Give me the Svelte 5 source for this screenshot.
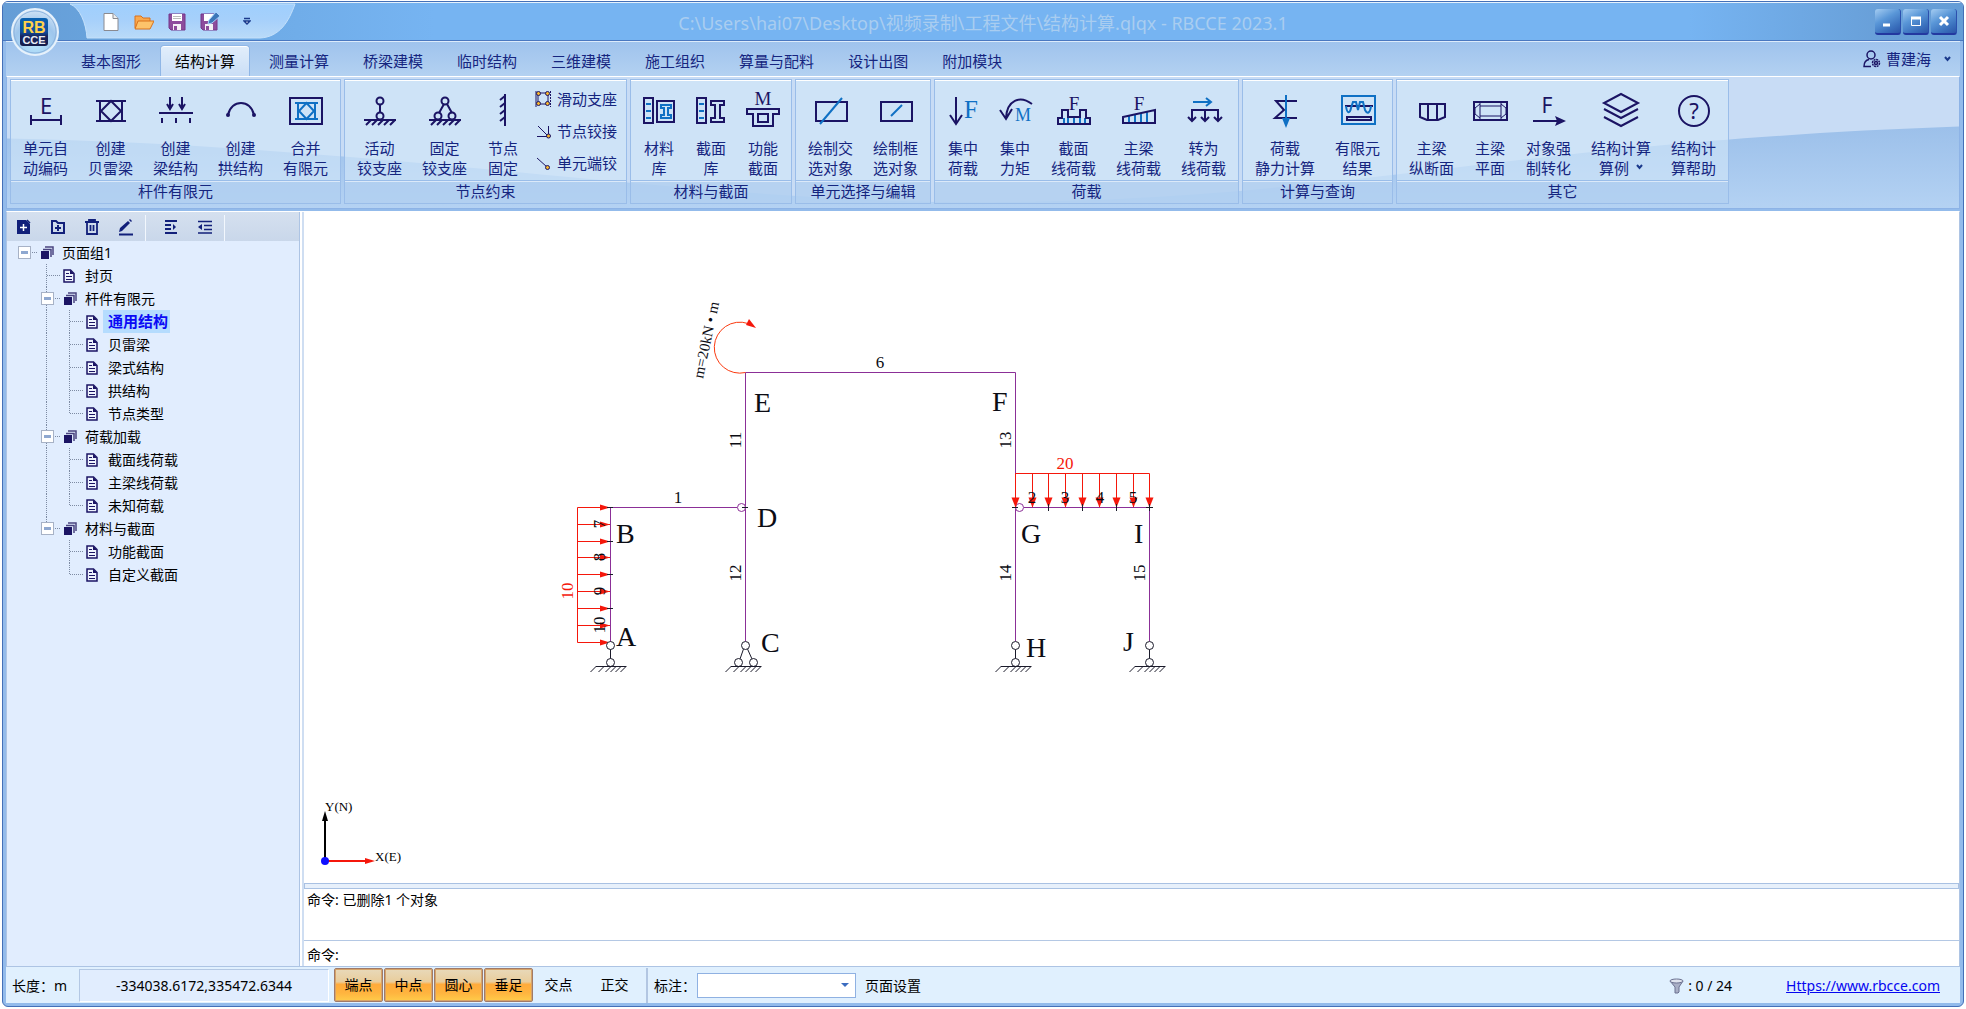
<script>
  const D = '#1b1464';
  const B = '#0f70c4';
  const line = (d, c = D, w = 2) => `<path d="${d}" fill="none" stroke="${c}" stroke-width="${w}"/>`;
  const ring = (x, y, r = 3.5) => `<circle cx="${x}" cy="${y}" r="${r}" fill="none" stroke="${D}" stroke-width="2"/>`;
  const letter = (t, x, y, size, c = D, fam = 'Liberation Serif') =>
    `<text x="${x}" y="${y}" font-size="${size}" fill="${c}" text-anchor="middle" font-family="${fam}, serif">${t}</text>`;
  const ground = line('M2 28H34') + line('M9 28L4 33M15 28L10 33M21 28L16 33M27 28L22 33M33 28L28 33');

  const icons = {
    encode: letter('E', 18, 22, 22, D, 'Noto Sans') + line('M2 28H34M3 23V33M33 23V33'),
    bailey: line('M3 9H33M3 29H33M7 9V29M29 9V29M18 9L28 19 18 29 8 19Z'),
    beam: line('M1 21H35M12 5V17M24 5V17M4 26V31M18 26V31M32 26V31') + line('M9 12L12 17 15 12M21 12L24 17 27 12'),
    arch: line('M5 23C8 7 28 7 31 23') + `<circle cx="5" cy="23" r="2" fill="${D}"/><circle cx="31" cy="23" r="2" fill="${D}"/>`,
    merge: line('M2 6H34V32H2Z') + line('M7 11H30M7 27H30M10 11V27M27 11V27M18.5 11L26 19 18.5 27 11 19Z', B),
    roller: ring(18, 9) + line('M18 12V21') + ring(18, 24) + ground,
    hinge: ring(18, 9) + line('M17 12L12 21M20 12L25 21') + ring(11, 24) + ring(25, 24) + ground,
    fixed: line('M20 2V34') + line('M20 4L15 8M20 11L15 15M20 18L15 22M20 25L15 29'),
    material: line('M3 6H12V31H3Z') + line('M5 12H10M5 19H10M5 26H10', B) + line('M16 9H33V30H16Z') + line('M20 13H30V16H27V23H30V26H20V23H23V16H20Z', B),
    sections: line('M4 6H13V31H4Z') + line('M6 12H11M6 19H11M6 26H11', B) + line('M18 9H31V13H27V26H31V30H18V26H22V13H18Z'),
    funcsec: letter('M', 18, 13, 19) + line('M2 17H34V22H28V34H8V22H2Z') + line('M13 22H23V30H13Z'),
    cross: line('M3 10H34V29H3Z') + line('M7 32L29 6', B),
    frame: line('M3 10H34V29H3Z') + line('M13 24L24 13', B),
    force: line('M11 5V31M5 23L11 32 17 23') + letter('F', 26, 26, 25, B),
    moment: line('M35 12C23 3 10 8 9 26M3 18L9 27 15 17') + letter('M', 26, 29, 18, B),
    secload: line('M8 26V32M12 26V32M18 26V32M24 26V32M29 26V32', B) + line('M2 32V26H6V18H12V25H24V18H30V26H34V32Z') + letter('F', 18, 18, 19),
    beamload: line('M8 24V30M14 23V30M20 22V30M26 20V30', B) + line('M2 25L34 18V31H2Z') + letter('F', 18, 18, 19),
    convert: line('M7 10H25M20 6L25 10 20 14', B) + line('M6 29V18H32V29M19 18V29M2 25L6 29 10 25M15 25L19 29 23 25M28 25L32 29 36 25'),
    statics: line('M30 9H9L17 18 8 26H30') + line('M19 3V30', B) + `<path d="M15 26H23L19 36Z" fill="${B}"/>`,
    results: line('M2 4H35V32H2Z', B) + line('M5 14H33M7 25H31V28H7Z') + line('M6 14C7 22 10 22 11 16L13 10 16 10 18 18 20 10 23 10 25 18C27 22 30 22 31 14', B),
    profile: line('M6 12H31V25L24 28H13L6 25Z M14 12V28M23 12V28'),
    plan: line('M2 10H35V28H2Z') + line('M8 10V28M29 10V28M8 14H29M8 24H29M8 12L3 16V22L8 26M29 12L34 16V22L29 26', D, 1),
    forced: letter('F', 16, 21, 21, D, 'Noto Sans') + line('M2 29H30') + `<path d="M24 24L35 29 24 34 26 29Z" fill="${D}"/>`,
    layers: line('M18 2L35 11 18 20 1 11ZM1 17L18 26 35 17M1 25L18 34 35 25'),
    help: `<circle cx="18" cy="19" r="15" fill="none" stroke="${D}" stroke-width="2"/>` + letter('?', 18, 27, 22, D, 'Noto Sans'),
  };

  const groups = [
    { name: '杆件有限元', items: [['encode', '单元自', '动编码'], ['bailey', '创建', '贝雷梁'], ['beam', '创建', '梁结构'], ['arch', '创建', '拱结构'], ['merge', '合并', '有限元']] },
    { name: '节点约束', items: [['roller', '活动', '铰支座'], ['hinge', '固定', '铰支座'], ['fixed', '节点', '固定']], small: ['滑动支座', '节点铰接', '单元端铰'] },
    { name: '材料与截面', items: [['material', '材料', '库'], ['sections', '截面', '库'], ['funcsec', '功能', '截面']] },
    { name: '单元选择与编辑', items: [['cross', '绘制交', '选对象'], ['frame', '绘制框', '选对象']] },
    { name: '荷载', items: [['force', '集中', '荷载'], ['moment', '集中', '力矩'], ['secload', '截面', '线荷载'], ['beamload', '主梁', '线荷载'], ['convert', '转为', '线荷载']] },
    { name: '计算与查询', items: [['statics', '荷载', '静力计算'], ['results', '有限元', '结果']] },
    { name: '其它', items: [['profile', '主梁', '纵断面'], ['plan', '主梁', '平面'], ['forced', '对象强', '制转化'], ['layers', '结构计算', '算例', true], ['help', '结构计', '算帮助']] },
  ];
  const size = (it) => ['', '', 'w2', 'w3', 'w4'][Math.max(it[1].length, it[2].length)];

  const smallIcons = [
    `<path d="M1 1V17M4 3H13M4 14H13M3 3V14M13 3V14" stroke="${D}" fill="none"/><path d="M15.5 1V17" stroke="${D}" stroke-dasharray="2 1"/><g fill="#f7b52c" stroke="${D}"><circle cx="3.5" cy="3.5" r="2"/><circle cx="12.5" cy="3.5" r="2"/><circle cx="3.5" cy="13.5" r="2"/><circle cx="12.5" cy="13.5" r="2"/></g>`,
    `<path d="M3 4L13 14M13.500 4V14M2 14.500H13" stroke="${D}" fill="none"/><circle cx="13.500" cy="14" r="2" fill="#f7b52c" stroke="${D}"/>`,
    `<path d="M2 4L12 13" stroke="${D}"/><circle cx="12.500" cy="13.500" r="2" fill="#f7b52c" stroke="${D}"/>`,
  ];

  const tabs = ['基本图形', '结构计算', '测量计算', '桥梁建模', '临时结构', '三维建模', '施工组织', '算量与配料', '设计出图', '附加模块'];
  let activeTab = $state('结构计算');
  let selected = $state('通用结构');

  const tree = [
    ['页面组1', ['g']],
    ['封页', ['b', 't']],
    ['杆件有限元', ['b', 'g']],
    ['通用结构', ['b', 'v', 't']],
    ['贝雷梁', ['b', 'v', 't']],
    ['梁式结构', ['b', 'v', 't']],
    ['拱结构', ['b', 'v', 't']],
    ['节点类型', ['b', 'v', 'l']],
    ['荷载加载', ['b', 'g']],
    ['截面线荷载', ['b', 'v', 't']],
    ['主梁线荷载', ['b', 'v', 't']],
    ['未知荷载', ['b', 'v', 'l']],
    ['材料与截面', ['b', 'g']],
    ['功能截面', ['b', 'b', 't']],
    ['自定义截面', ['b', 'b', 'l']],
  ];

  const sideLoad = [507.5, 524.5, 541.5, 557.5, 574.5, 591.5, 608.5, 625.5, 642.5];
  const topLoad = [1015.5, 1032.5, 1048.5, 1065.5, 1082.5, 1099.5, 1116.5, 1133.5, 1149.5];
  const nodes = [['E', 754, 412], ['B', 616, 543], ['D', 757, 527], ['A', 616, 646], ['C', 761, 652], ['F', 992, 411], ['G', 1021, 543], ['I', 1134, 543], ['H', 1026, 657], ['J', 1123, 651]];
  const flat = [['1', 678, 503], ['6', 880, 368], ['2', 1032, 503], ['3', 1065, 503], ['4', 1100, 503], ['5', 1133, 503]];
  const upright = [['11', 741, 440], ['12', 741, 573], ['13', 1011, 440], ['14', 1011, 573], ['15', 1145, 573], ['7', 605, 524], ['8', 605, 557], ['9', 605, 591], ['10', 605, 625]];

  let snaps = $state([
    { name: '端点', on: true }, { name: '中点', on: true }, { name: '圆心', on: true },
    { name: '垂足', on: true }, { name: '交点', on: false }, { name: '正交', on: false },
  ]);
</script>

<div class="desk">
  <div class="window">
    <header class="title">
      <svg class="quick-bg" width="226" height="36" viewBox="0 0 226 36">
        <defs>
          <linearGradient id="qa" x1="0" y1="0" x2="0" y2="1">
            <stop offset="0" stop-color="#9fcffd" /><stop offset=".45" stop-color="#a6d0fb" /><stop offset="1" stop-color="#b9daf8" />
          </linearGradient>
        </defs>
        <path d="M0 1C10 5 16 20 17 35H190C210 34 219 18 225 1Z" fill="url(#qa)" stroke="#c4e0fa" />
      </svg>
      <div class="quick">
        <button aria-label="新建"><svg width="18" height="20"><path d="M2 1.500H11L16 6.500V18.500H2Z" fill="#fff" stroke="#8a8a90" /><path d="M11 1.500V6.500H16" fill="#eee" stroke="#8a8a90" /></svg></button>
        <button aria-label="打开"><svg width="20" height="20"><path d="M1 16V4H7L9 6H16V9" fill="#f9a94e" stroke="#d9711c" /><path d="M1 17L4 9H20L16 17Z" fill="#fdc36b" stroke="#d9711c" /></svg></button>
        <button aria-label="保存"><svg width="18" height="20"><path d="M1 2H17V18H3L1 16Z" fill="#8d4c9c" stroke="#74358a" /><path d="M4 2H14V9H4Z" fill="#fff" /><path d="M5 4.500H13M5 6.500H13" stroke="#bbb" /><path d="M5 12H13V18H5Z" fill="#f3f0f5" /><path d="M6 14H9V18H6Z" fill="#8d4c9c" /></svg></button>
        <button aria-label="另存为"><svg width="20" height="20"><path d="M1 2H17V18H3L1 16Z" fill="#8d4c9c" stroke="#74358a" /><path d="M4 2H14V9H4Z" fill="#fff" /><path d="M5 12H13V18H5Z" fill="#f3f0f5" /><path d="M6 14H9V18H6Z" fill="#8d4c9c" /><path d="M16 0L20 4 12 11 8 12 9 8Z" fill="#3b76b8" stroke="#a6d0fb" /></svg></button>
        <button class="more" aria-label="自定义"><svg width="8" height="10"><path d="M1 1.500H7M1 4L4 7 7 4Z" stroke="#1b3a8c" stroke-width="1.500" fill="#fff" /></svg></button>
      </div>
      <h1>C:\Users\hai07\Desktop\视频录制\工程文件\结构计算.qlqx - RBCCE 2023.1</h1>
      <div class="controls">
        <button aria-label="最小化"><svg width="12" height="12"><path d="M1 10H8" stroke="#fff" stroke-width="3" /></svg></button>
        <button aria-label="最大化"><svg width="12" height="12"><path d="M1 3H11" stroke="#fff" stroke-width="3" /><path d="M1.500 2V10.500H10.500V2" fill="none" stroke="#fff" /></svg></button>
        <button aria-label="关闭"><svg width="12" height="12"><path d="M2 2L10 10M10 2L2 10" stroke="#fff" stroke-width="3" /></svg></button>
      </div>
    </header>

    <button class="orb" aria-label="RBCCE">
      <svg width="50" height="50" viewBox="0 0 50 50">
        <defs>
          <radialGradient id="orb" cx=".5" cy=".75" r=".75"><stop offset="0" stop-color="#b8e6fd" /><stop offset=".6" stop-color="#9ec6ec" /><stop offset="1" stop-color="#d5e6f7" /></radialGradient>
          <linearGradient id="chip" x1="0" y1="0" x2="0" y2="1"><stop offset="0" stop-color="#0b62b0" /><stop offset=".5" stop-color="#0e4d9d" /><stop offset=".65" stop-color="#18255f" /><stop offset="1" stop-color="#141c4a" /></linearGradient>
        </defs>
        <circle cx="25" cy="25" r="23" fill="url(#orb)" stroke="#e6f1fb" stroke-width="2" />
        <circle cx="25" cy="25" r="21" fill="none" stroke="#8db4de" />
        <rect x="10" y="11" width="28" height="28" rx="3" fill="url(#chip)" />
        <text x="24" y="26" text-anchor="middle" font-family="Liberation Sans, sans-serif" font-weight="bold" font-size="16" fill="#ffd24a">RB</text>
        <text x="24" y="37" text-anchor="middle" font-family="Liberation Sans, sans-serif" font-weight="bold" font-size="11" fill="#e8ecf5">CCE</text>
      </svg>
    </button>

    <div class="body">
      <nav class="tabs">
        {#each tabs as tab}
          <button class="tab" class:active={tab === activeTab} onclick={() => (activeTab = tab)}>{tab}</button>
        {/each}
        <button class="user">
          <svg width="18" height="18" viewBox="0 0 18 18"><g fill="none" stroke={D} stroke-width="1.500"><circle cx="8" cy="5" r="4" /><path d="M8 16.500H1C1 12 3 10 6 9.500" /><circle cx="13" cy="13" r="3.500" stroke-dasharray="2 .7" /><circle cx="13" cy="13" r="1.500" /></g></svg>
          <span>曹建海</span>
          <svg class="chev" width="7" height="6"><path d="M1 1L3.500 4 6 1" fill="none" stroke="#1b3a8c" stroke-width="2" /></svg>
        </button>
      </nav>

      <section class="ribbon">
        <svg class="swoosh" viewBox="0 0 1952 132" preserveAspectRatio="none" aria-hidden="true">
          <defs><linearGradient id="sw" x1="0" y1="0" x2="0" y2="1"><stop offset="0" stop-color="#9cc0ea" /><stop offset="1" stop-color="#b4d2f3" /></linearGradient></defs>
          <path d="M0 62C400 70 700 130 1000 126 1350 122 1500 66 1952 50V132H0Z" fill="url(#sw)" />
        </svg>
        {#each groups as g}
          <div class="group">
            <div class="items">
              {#each g.items as it}
                <button class="cmd {size(it)}">
                  <svg width="36" height="36" viewBox="0 0 36 36">{@html icons[it[0]]}</svg>
                  <span>{it[1]}</span>
                  <span>{it[2]}{#if it[3]}<svg class="drop" width="7" height="8"><path d="M1 1L3.500 4 6 1" fill="none" stroke="#1b3a8c" stroke-width="2" /></svg>{/if}</span>
                </button>
              {/each}
              {#if g.small}
                <div class="stack">
                  {#each g.small as s, i}
                    <button><svg width="18" height="18">{@html smallIcons[i]}</svg>{s}</button>
                  {/each}
                </div>
              {/if}
            </div>
            <div class="caption">{g.name}</div>
          </div>
        {/each}
      </section>

      <main>
        <aside>
          <div class="tools">
            <button aria-label="新建页"><svg width="16" height="16"><path d="M1 1H10L14 5V15H1Z" fill="#12207a" /><path d="M11 1L14 4" stroke="#12207a" stroke-width="1.500" /><path d="M4 8.500H11M7.500 5V12" stroke="#fff" stroke-width="1.500" /></svg></button>
            <button aria-label="新建组"><svg width="16" height="16"><path d="M2 2H6L8 4H14V14H2Z" fill="none" stroke="#12207a" stroke-width="2" /><path d="M5 9H11M8 6V12" stroke="#12207a" stroke-width="2" /></svg></button>
            <button aria-label="删除"><svg width="16" height="18"><path d="M1 4H15M5 4V2H11V4M3 4V16H13V4M6.500 7V13M9.500 7V13" fill="none" stroke="#12207a" stroke-width="1.800" /></svg></button>
            <button aria-label="编辑"><svg width="16" height="18"><path d="M1 16.500H15" stroke="#12207a" stroke-width="2" /><path d="M1 14L2 10 10 3 12 5 4 13ZM11 2L12 1 14 3 13 4Z" fill="#12207a" /></svg></button>
            <span class="rule"></span>
            <button aria-label="展开"><svg width="14" height="16"><path d="M1 2H13M1 6H7M1 10H7M1 14H13" stroke="#12207a" stroke-width="2" /><path d="M9 5L12 8 9 11Z" fill="#12207a" /></svg></button>
            <button aria-label="折叠"><svg width="16" height="16"><path d="M1 2.500H15M7 6.500H15M7 10.500H15M1 14H15" stroke="#12207a" stroke-width="1.500" /><path d="M5 5L1 8 5 11Z" fill="#12207a" /></svg></button>
            <span class="rule"></span>
          </div>
          <ul class="tree">
            {#each tree as [label, cells]}
              {@const group = cells.includes('g')}
              <li>
                {#each cells as c}
                  {#if c === 'g'}
                    <span class="cell toggle-cell" class:mid={cells.length > 1} class:end={label === '材料与截面'}><button class="toggle" aria-label="折叠{label}"></button></span>
                  {:else}
                    <span class="cell {c}"></span>
                  {/if}
                {/each}
                <span class="pic">
                  {#if group}
                    <svg width="14" height="14"><path d="M1 5H9V13H1Z" fill={D} /><path d="M3 3.500H11V11M5 1H13V9" fill="none" stroke="#4a4480" stroke-width="1.500" /></svg>
                  {:else}
                    <svg width="12" height="14"><path d="M1 1H7.500L11 4.500V13H1Z" fill="#eef3fd" stroke={D} stroke-width="1.500" /><path d="M7 1V5H11Z" fill={D} /><path d="M3 4.500H6M3 7.500H9M3 10.500H9" stroke={D} /></svg>
                  {/if}
                </span>
                <button class="label" class:sel={label === selected} onclick={() => (selected = label)}>{label}</button>
              </li>
            {/each}
          </ul>
        </aside>

        <div class="work">
          <div class="canvas">
            <svg class="drawing" width="1654" height="671">
              <g transform="translate(-304 -212)">
                <g stroke="#8b2f97" fill="none">
                  <path d="M610.500 642V507.500H737M745.500 641V372.500H1015.500V641M1024 507.500H1149.500V641" />
                  <circle cx="741.500" cy="507.500" r="4" fill="#fff" /><circle cx="1019.500" cy="507.500" r="4" fill="#fff" />
                </g>
                <g stroke="#f5170b" fill="none">
                  <path d="M577.500 507.500V642.500M1015.500 473.500H1149.500" />
                  {#each sideLoad as y}<path d="M577.500 {y}H610" />{/each}
                  {#each topLoad as x}<path d="M{x} 473.500V507" />{/each}
                  <path d="M745.500 372.500A25.500 25.500 0 1 1 748 323.500" stroke="#fa3a10" />
                </g>
                <g fill="#f5170b">
                  {#each sideLoad as y}<path d="M600 {y - 3}L610 {y}L600 {y + 3}Z" />{/each}
                  {#each topLoad as x}<path d="M{x - 4} 497.500L{x} 507.500L{x + 4} 497.500Z" />{/each}
                  <path d="M756 328L749 319 746 325Z" />
                </g>
                <g stroke="#1a1a2a" fill="none">
                  <path d="M607 541.500H613M607 574.500H613M607 608.500H613M607 507.500H613M742 507.500H748M1012 507.500H1018M1146 507.500H1153M1048.500 504V511M1082.500 504V511M1116.500 504V511M1149.500 504V511" />
                  {#each [610.5, 745.5, 1015.5, 1149.5] as x}
                    {#if x === 745.5}
                      <path d="M743.500 649L740 659M747.500 649L752 659" />
                      <circle cx={x - 7} cy="662.500" r="4" fill="#fff" /><circle cx={x + 8} cy="662.500" r="4" fill="#fff" />
                    {:else}
                      <path d="M{x} 649V659" /><circle cx={x} cy="662.500" r="4" fill="#fff" />
                    {/if}
                    <circle cx={x} cy="645.500" r="4" fill="#fff" />
                    <path d="M{x - 15} 666.500H{x + 16}" />
                    {#each [-15, -7, 0, 5, 10, 15] as k}<path d="M{x + k} 667L{x + k - 5} 672" />{/each}
                  {/each}
                </g>
                <g class="node">{#each nodes as [t, x, y]}<text {x} {y}>{t}</text>{/each}</g>
                <g class="num">
                  {#each flat as [t, x, y]}<text {x} {y}>{t}</text>{/each}
                  {#each upright as [t, x, y]}<text transform="translate({x} {y}) rotate(-90)">{t}</text>{/each}
                  <text class="red" x="1065" y="469">20</text>
                  <text class="red" transform="translate(573 591) rotate(-90)">10</text>
                  <text class="moment" transform="translate(711 341) rotate(-78)">m=20kN • m</text>
                </g>
              </g>
            </svg>
            <svg class="axes" width="90" height="70">
              <path d="M11 56V16" stroke="#000" stroke-width="2" /><path d="M11 6L8 16H14Z" />
              <path d="M11 56H52" stroke="#f5170b" stroke-width="2" /><path d="M61 56L51 53V59Z" fill="#f5170b" />
              <circle cx="11" cy="56" r="4" fill="#1010ff" />
              <text x="11" y="6">Y(N)</text><text x="61" y="56">X(E)</text>
            </svg>
          </div>
          <div class="split"></div>
          <div class="log">命令: 已删除1 个对象</div>
          <div class="prompt"><label for="cmd">命令:</label><input id="cmd" type="text" /></div>
        </div>
      </main>

      <footer>
        <span class="unit">长度：m</span>
        <output class="coords">-334038.6172,335472.6344</output>
        <div class="snaps">
          {#each snaps as s}
            <button class:on={s.on} aria-pressed={s.on} onclick={() => (s.on = !s.on)}>{s.name}</button>
          {/each}
        </div>
        <label class="dim" for="dim">标注：</label>
        <div class="pick">
          <select id="dim"><option></option></select>
          <svg width="8" height="5" aria-hidden="true"><path d="M0 0H8L4 4Z" fill="#3b6cc0" /></svg>
        </div>
        <button class="plain">页面设置</button>
        <span class="filter">
          <svg width="15" height="16"><path d="M1 3L6 9V15H9L10 14V9L14 3Z" fill="#a9afc6" stroke="#6a7090" /><ellipse cx="7.500" cy="3" rx="6.500" ry="2" fill="#dfe3ee" stroke="#6a7090" /></svg>
          : 0 / 24
        </span>
        <a href="https://www.rbcce.com">Https://www.rbcce.com</a>
      </footer>
    </div>
  </div>
</div>

<style>
  :global(body) { margin: 0; background: #fff; }
  * { box-sizing: border-box; }
  .desk { min-height: 100vh; display: flex; padding: 1px 2px 4px; font: 14px/20px 'Noto Sans', 'Noto Sans CJK SC', sans-serif; color: #000; }
  button, input, select { font: inherit; color: inherit; background: none; border: 0; padding: 0; margin: 0; }
  svg { display: block; flex: none; }
  .window { position: relative; flex: 1; min-width: 0; display: flex; flex-direction: column; border: 1px solid #4470b8; border-radius: 6px; background: #93bbeb; overflow: hidden; }

  .title { height: 39px; display: grid; grid-template-columns: 1fr auto 1fr; align-items: center; position: relative; border-top: 1px solid #e4f1fd; border-bottom: 1px solid #4a78c0; background: linear-gradient(90deg, #659dd6, #6aa6e0 8%, #76b4f2 22%, #76b4f2 86%, #689fd8 96%, #659dd6); }
  .quick-bg { position: absolute; left: 67px; top: 0; }
  .quick { position: relative; display: flex; align-items: center; gap: 14px; margin-left: 99px; }
  .quick .more { margin-left: 9px; }
  h1 { min-width: 0; margin: 0; padding-top: 2px; text-align: center; font-size: 18px; line-height: 24px; font-weight: 400; color: #a9cdf0; white-space: nowrap; }
  .controls { display: flex; justify-content: flex-end; gap: 2px; margin-right: 6px; }
  .controls button { width: 26px; height: 26px; border-radius: 3px; display: grid; place-items: center; background: linear-gradient(150deg, #a5cdf2, #5a97d8 40%, #3a70bd 75%, #2c55a8); border-bottom: 2px solid #2338a0; border-right: 1px solid #2c50ae; }
  .orb { position: absolute; left: 7px; top: 5px; }

  .body { flex: 1; display: flex; flex-direction: column; padding: 0 3px 3px; }
  .tabs { display: flex; align-items: flex-end; height: 35px; padding-left: 58px; background: linear-gradient(#9fc3ed, #b3d1f1); border-top: 1px solid #dcebfb; color: #15257f; font-size: 15px; }
  .tab { height: 31px; padding: 0 14px; margin: 0 2px; border: 1px solid transparent; border-bottom: 0; border-radius: 4px 4px 0 0; }
  .tab.active { color: #000; border-color: #8fb6e6; background: linear-gradient(#e2eefb, #cadef6); box-shadow: inset 0 1px #fff; }
  .user { margin-left: auto; display: flex; align-items: center; gap: 5px; height: 34px; padding-right: 9px; }
  .chev { margin-left: 8px; }

  .ribbon { position: relative; display: flex; gap: 3px; padding: 2px 3px 4px; border: 1px solid #8db3e6; border-top-color: #fff; background: #c8dcf5; }
  .swoosh { position: absolute; inset: 0; width: 100%; height: 100%; }
  .group { position: relative; border: 1px solid #9abde9; box-shadow: inset 0 1px #fff; background: rgba(210, 231, 248, .62); display: flex; flex-direction: column; }
  .items { display: flex; padding: 12px 2px 2px; }
  .cmd { display: flex; flex-direction: column; align-items: center; color: #15257f; font-size: 15px; line-height: 20px; white-space: nowrap; }
  .cmd svg { margin-bottom: 10px; overflow: visible; }
  .cmd .drop { display: inline-block; margin: 0 0 2px 7px; }
  .w2 { width: 52px; }
  .w3 { width: 65px; }
  .w4 { width: 80px; }
  .stack { width: 95px; display: flex; flex-direction: column; gap: 12px; margin-top: -3px; padding-left: 6px; }
  .stack button { display: flex; align-items: center; gap: 4px; height: 20px; font-size: 15px; color: #15257f; white-space: nowrap; }
  .caption { height: 23px; border-top: 1px solid #9abde9; box-shadow: inset 0 1px #dbe9f9; background: rgba(158, 194, 235, .5); text-align: center; line-height: 20px; font-size: 15px; color: #15257f; }

  main { flex: 1; display: flex; min-height: 0; margin-top: 2px; border: 1px solid #adc4e4; border-top-color: #fff; background: #fff; }
  aside { width: 293px; background: #e1edfe; border-right: 1px solid #adc4e4; }
  .tools { display: flex; align-items: center; height: 29px; background: linear-gradient(#d5e0ef, #c9d7ea); }
  .tools button { width: 34px; display: grid; place-items: center; }
  .rule { width: 1px; height: 26px; margin: 3px 8px 0 2px; background: #f2f7fd; }
  .tree { list-style: none; margin: 0; padding: 0 0 0 6px; }
  .tree li { display: flex; height: 23px; align-items: center; }
  .cell { position: relative; width: 23px; height: 23px; }
  .cell.v::before, .cell.t::before, .cell.l::before, .mid::before { content: ''; position: absolute; left: 10px; top: 0; bottom: 0; width: 1px; background: repeating-linear-gradient(#7d8ba3 0 1px, transparent 1px 2px); }
  .cell.l::before, .cell.end::before { bottom: 11px; }
  .cell.t::after, .cell.l::after, .toggle-cell::after { content: ''; position: absolute; left: 11px; right: -2px; top: 11px; height: 1px; background: repeating-linear-gradient(90deg, #7d8ba3 0 1px, transparent 1px 2px); }
  .toggle { position: relative; z-index: 1; display: block; width: 13px; height: 13px; margin: 5px; border: 1px solid #a7b2c6; background: linear-gradient(#8fa8d0, #8fa8d0) center / 7px 3px no-repeat, #fff; }
  .pic { width: 21px; padding-left: 4px; }
  .label { height: 23px; padding: 0 5px; line-height: 23px; white-space: nowrap; }
  .label.sel { padding: 0 2px 0 5px; background: #b5dcfe; color: #0a0af5; font-weight: 700; font-size: 15px; }

  .work { flex: 1; min-width: 0; display: flex; flex-direction: column; margin-left: 2px; border-left: 2px solid #cfdef2; }
  .canvas { position: relative; flex: 1; min-height: 671px; overflow: hidden; }
  .drawing { max-width: none; }
  .axes { position: absolute; left: 10px; bottom: 8px; overflow: visible; font: 13px 'Liberation Serif', serif; }
  .node text { font: 28px 'Liberation Serif', serif; fill: #0c0c14; }
  .num text { font: 17px 'Liberation Serif', serif; fill: #0c0c14; text-anchor: middle; }
  .num .red { fill: #f5170b; }
  .num .moment { font-size: 15px; }
  .split { height: 6px; border: 1px solid #a9c1e3; background: #e7f0fb; }
  .log { height: 52px; padding: 1px 3px; border-bottom: 1px solid #b4c8e4; }
  .prompt { display: flex; align-items: center; height: 25px; padding: 2px 3px 0; }
  .prompt input { flex: 1; margin-left: 4px; outline: 0; }

  footer { display: flex; align-items: center; height: 36px; padding-top: 1px; background: #e0f0fe; white-space: nowrap; }
  .unit { width: 73px; padding-left: 6px; }
  .coords { width: 250px; height: 33px; line-height: 32px; text-align: center; background: #e1edfe; border: 1px solid #b3c8e4; border-right-color: #fff; border-bottom-color: #fff; }
  .snaps { display: flex; gap: 1px; margin-left: 5px; padding-right: 7px; border-right: 2px solid #b2c6e2; height: 35px; }
  .snaps button { width: 49px; height: 34px; border: 1px solid transparent; }
  .snaps button:last-child { margin-left: 6px; }
  .snaps .on { border-color: #a07a68; border-radius: 2px; background: linear-gradient(#e8d9ba, #e9cd9c 40%, #ffab3b 48%, #ffb43f 75%, #ffcc4a); box-shadow: inset 0 0 0 1px #d7a469; }
  .dim { margin-left: 6px; width: 43px; }
  .pick { position: relative; width: 159px; }
  .pick select { display: block; width: 100%; height: 25px; appearance: none; background: #fff; border: 1px solid #8fb1e2; }
  .pick svg { position: absolute; right: 7px; top: 10px; pointer-events: none; }
  .plain { margin-left: 9px; }
  .filter { display: flex; align-items: center; gap: 4px; margin-left: auto; }
  a { margin: 0 20px 0 54px; color: #0505f0; }
</style>
